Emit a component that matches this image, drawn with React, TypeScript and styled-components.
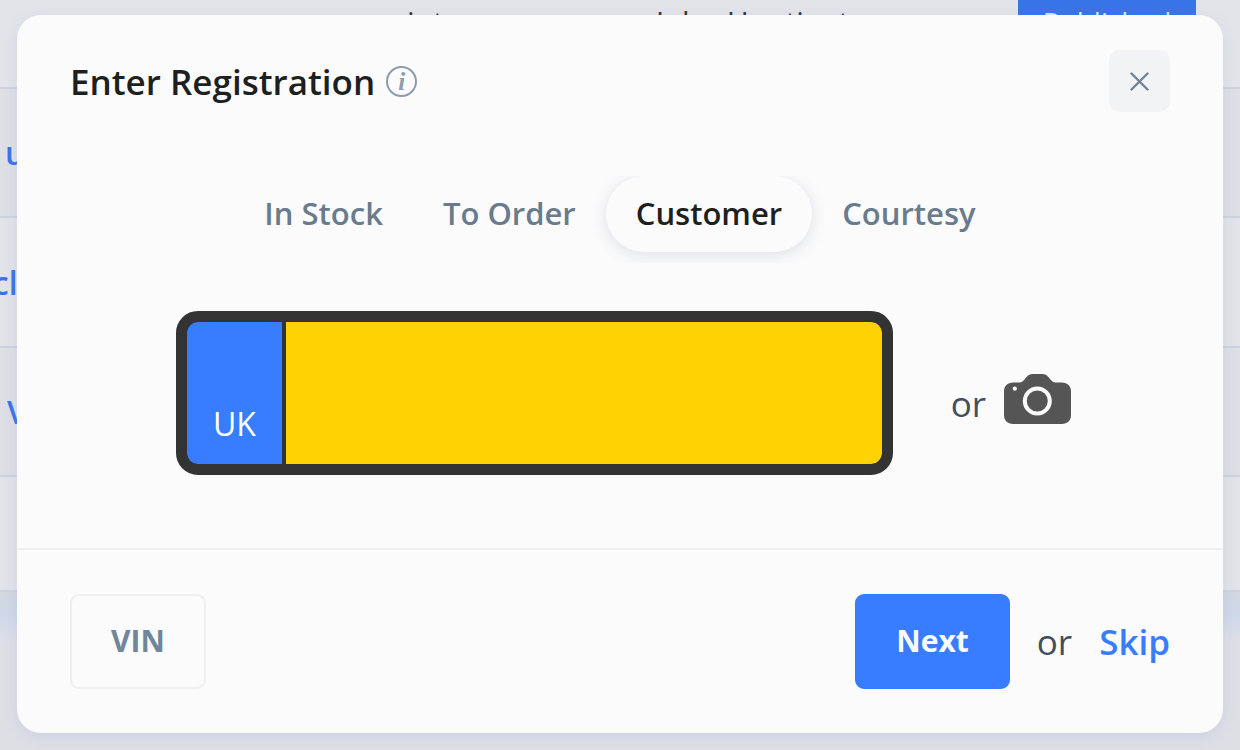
import React, { useState } from "react";
import styled, { createGlobalStyle } from "styled-components";

const GlobalStyle = createGlobalStyle`
  *, *::before, *::after { box-sizing: border-box; }
  body {
    margin: 0;
    font-family: "Open Sans", "Noto Sans", sans-serif;
    color: #3f4c5a;
    background: #dedfe5;
  }
  button, input { font-family: inherit; }
`;

const Page = styled.main`
  position: relative;
  min-height: 100vh;
  padding: 15px 17px 17px;
  overflow: hidden;
`;

const Backdrop = styled.div`
  position: absolute;
  inset: 0;
  display: flex;
  flex-direction: column;
  overflow: hidden;
`;

const TopRow = styled.div`
  display: flex;
  align-items: flex-start;
  height: 89px;
  padding: 0 44px 0 372px;
  border-bottom: 2px solid #ccd1de;
  background: #e3e4e9;
  color: #2b3440;
  font-size: 30px;
  line-height: 43px;
`;

const TopCell = styled.span<{ $width?: number }>`
  flex: none;
  width: ${(p) => (p.$width ? `${p.$width}px` : "auto")};
`;

const Status = styled.span`
  width: 178px;
  height: 56px;
  margin-left: auto;
  background: #3973e8;
  color: #dfe4f0;
  font-size: 28px;
  line-height: 44px;
  text-align: center;
`;

const Row = styled.div<{ $shade: string; $height: number }>`
  display: flex;
  align-items: center;
  flex: none;
  height: ${(p) => p.$height}px;
  border-bottom: 2px solid #ccd1de;
  background: ${(p) => p.$shade};
`;

const RowText = styled.span<{ $indent?: number; $end?: boolean }>`
  display: flex;
  justify-content: ${(p) => (p.$end ? "flex-end" : "flex-start")};
  width: 36px;
  padding-left: ${(p) => p.$indent ?? 0}px;
  color: #3973e8;
  font-size: 32px;
  font-weight: 600;
`;

const Below = styled.div`
  flex: 1;
  background: linear-gradient(#d2d7df, #d0d8e9 24px, #dedfe5 50px);
`;

const Dialog = styled.section`
  position: relative;
  display: flex;
  flex-direction: column;
  border-radius: 24px;
  background: #fbfbfc;
  box-shadow: 0 4px 14px rgba(120, 155, 220, 0.18);
`;

const Header = styled.header`
  display: flex;
  align-items: center;
  justify-content: space-between;
  padding: 35px 53px 0;
`;

const TitleGroup = styled.div`
  display: flex;
  align-items: center;
  gap: 11px;
`;

const Title = styled.h1`
  margin: 0;
  padding-top: 2px;
  color: #1d1f21;
  font-size: 35px;
  font-weight: 600;
  line-height: 48px;
`;

const InfoButton = styled.button`
  display: grid;
  place-items: center;
  width: 31px;
  height: 31px;
  padding: 0;
  border: 2px solid #8c9cad;
  border-radius: 50%;
  background: none;
  color: #8c9cad;
  font: italic 700 25px/27px "Liberation Serif", serif;
`;

const CloseButton = styled.button`
  display: grid;
  place-items: center;
  width: 61px;
  height: 62px;
  padding: 0;
  border: 0;
  border-radius: 11px;
  background: #f1f3f5;
`;

const Tabs = styled.div`
  display: flex;
  justify-content: center;
  margin-top: 64px;
`;

const Tab = styled.button<{ $active: boolean }>`
  height: 76px;
  padding: 0 30px 2px;
  border: 0;
  border-radius: 38px;
  background: ${(p) => (p.$active ? "#fbfbfc" : "transparent")};
  color: ${(p) => (p.$active ? "#1d1f21" : "#697b8c")};
  box-shadow: ${(p) => (p.$active ? "0 3px 16px rgba(60, 80, 120, 0.16)" : "none")};
  clip-path: inset(0 -13px -11px -13px);
  font-size: 31px;
  font-weight: 600;
`;

const Entry = styled.div`
  display: flex;
  align-items: center;
  gap: 58px;
  margin-top: 59px;
  padding: 0 152px 0 159px;
`;

const Plate = styled.label`
  display: flex;
  flex: 1;
  min-width: 0;
  height: 164px;
  overflow: hidden;
  border: 11px solid #333333;
  border-radius: 22px;
  background: #333333;
`;

const Country = styled.span`
  display: flex;
  align-items: flex-end;
  justify-content: center;
  flex: none;
  width: 95px;
  padding-bottom: 18px;
  border-radius: 11px 0 0 11px;
  background: #387dff;
  color: #ffffff;
  font-size: 32px;
  line-height: 44px;
`;

const PlateInput = styled.input`
  flex: 1;
  min-width: 0;
  margin-left: 4px;
  padding: 0 24px;
  border: 0;
  border-radius: 0 11px 11px 0;
  outline: 0;
  background: #ffd204;
  color: #333333;
  font-size: 80px;
  font-weight: 700;
  text-transform: uppercase;
`;

const Scan = styled.div`
  display: flex;
  align-items: center;
  gap: 18px;
  padding-top: 22px;
`;

const Or = styled.span`
  color: #434f5b;
  font-size: 35px;
  line-height: 48px;
`;

const CameraButton = styled.button`
  display: flex;
  padding: 0 0 10px;
  border: 0;
  background: none;
`;

const Footer = styled.footer`
  display: flex;
  align-items: center;
  justify-content: space-between;
  margin-top: 73px;
  padding: 44px 53px;
  border-top: 2px solid #eeeff1;
`;

const Actions = styled.div`
  display: flex;
  align-items: center;
  gap: 27px;
`;

const FooterButton = styled.button<{ $primary?: boolean }>`
  height: 95px;
  padding: 0 39px 2px;
  border: 2px solid ${(p) => (p.$primary ? "#387dff" : "#eeeff1")};
  border-radius: 9px;
  background: ${(p) => (p.$primary ? "#387dff" : "#fbfbfc")};
  color: ${(p) => (p.$primary ? "#fbfbfc" : "#70869d")};
  font-size: 30px;
  font-weight: 700;
`;

const SkipLink = styled.a`
  color: #387dff;
  font-size: 35px;
  font-weight: 600;
  line-height: 48px;
  text-decoration: none;
`;

const CloseIcon = () => (
  <svg width="19" height="19" viewBox="0 0 19 19" fill="none" stroke="#71849b" strokeWidth="2.4" strokeLinecap="round" aria-hidden="true">
    <path d="M1.500 1.500l16 16M17.500 1.500l-16 16" />
  </svg>
);

const CameraIcon = () => (
  <svg width="67" height="50" viewBox="0 0 67 50" aria-hidden="true">
    <path
      fill="#555555"
      d="M9 8.500h6.500c2 0 3.300-1.200 5-3C22.700 3 24.500 0 28.500 0h10c4 0 5.800 3 8 5.500 1.700 1.800 3 3 5 3H58c5.500 0 9 3.500 9 9V41c0 5.500-3.500 9-9 9H9c-5.500 0-9-3.500-9-9V17.500c0-5.500 3.500-9 9-9z"
    />
    <circle cx="33.300" cy="27" r="12.500" fill="none" stroke="#fbfbfc" strokeWidth="4" />
    <circle cx="10.800" cy="14.700" r="2.100" fill="#fbfbfc" />
  </svg>
);

const TABS = ["In Stock", "To Order", "Customer", "Courtesy"];

export default function App() {
  const [tab, setTab] = useState("Customer");
  const [registration, setRegistration] = useState("");

  return (
    <Page>
      <GlobalStyle />
      <Backdrop aria-hidden="true">
        <TopRow>
          <TopCell $width={284}>paint</TopCell>
          <TopCell>John Huntington</TopCell>
          <Status>Published</Status>
        </TopRow>
        <Row $shade="#dedfe5" $height={129}>
          <RowText $indent={5}>u</RowText>
        </Row>
        <Row $shade="#e2e3e8" $height={130}>
          <RowText $end>cle</RowText>
        </Row>
        <Row $shade="#dedfe5" $height={129}>
          <RowText $indent={7}>V</RowText>
        </Row>
        <Row $shade="#e2e3e8" $height={115} />
        <Below />
      </Backdrop>

      <Dialog role="dialog" aria-labelledby="dialog-title">
        <Header>
          <TitleGroup>
            <Title id="dialog-title">Enter Registration</Title>
            <InfoButton type="button" aria-label="About registration">i</InfoButton>
          </TitleGroup>
          <CloseButton type="button" aria-label="Close">
            <CloseIcon />
          </CloseButton>
        </Header>

        <Tabs role="tablist">
          {TABS.map((name) => (
            <Tab
              key={name}
              type="button"
              role="tab"
              aria-selected={tab === name}
              $active={tab === name}
              onClick={() => setTab(name)}
            >
              {name}
            </Tab>
          ))}
        </Tabs>

        <Entry>
          <Plate htmlFor="registration">
            <Country>UK</Country>
            <PlateInput
              id="registration"
              type="text"
              aria-label="Registration number"
              value={registration}
              onChange={(e) => setRegistration(e.target.value)}
            />
          </Plate>
          <Scan>
            <Or>or</Or>
            <CameraButton type="button" aria-label="Scan with camera">
              <CameraIcon />
            </CameraButton>
          </Scan>
        </Entry>

        <Footer>
          <FooterButton type="button">VIN</FooterButton>
          <Actions>
            <FooterButton type="button" $primary>Next</FooterButton>
            <Or>or</Or>
            <SkipLink href="#skip">Skip</SkipLink>
          </Actions>
        </Footer>
      </Dialog>
    </Page>
  );
}
